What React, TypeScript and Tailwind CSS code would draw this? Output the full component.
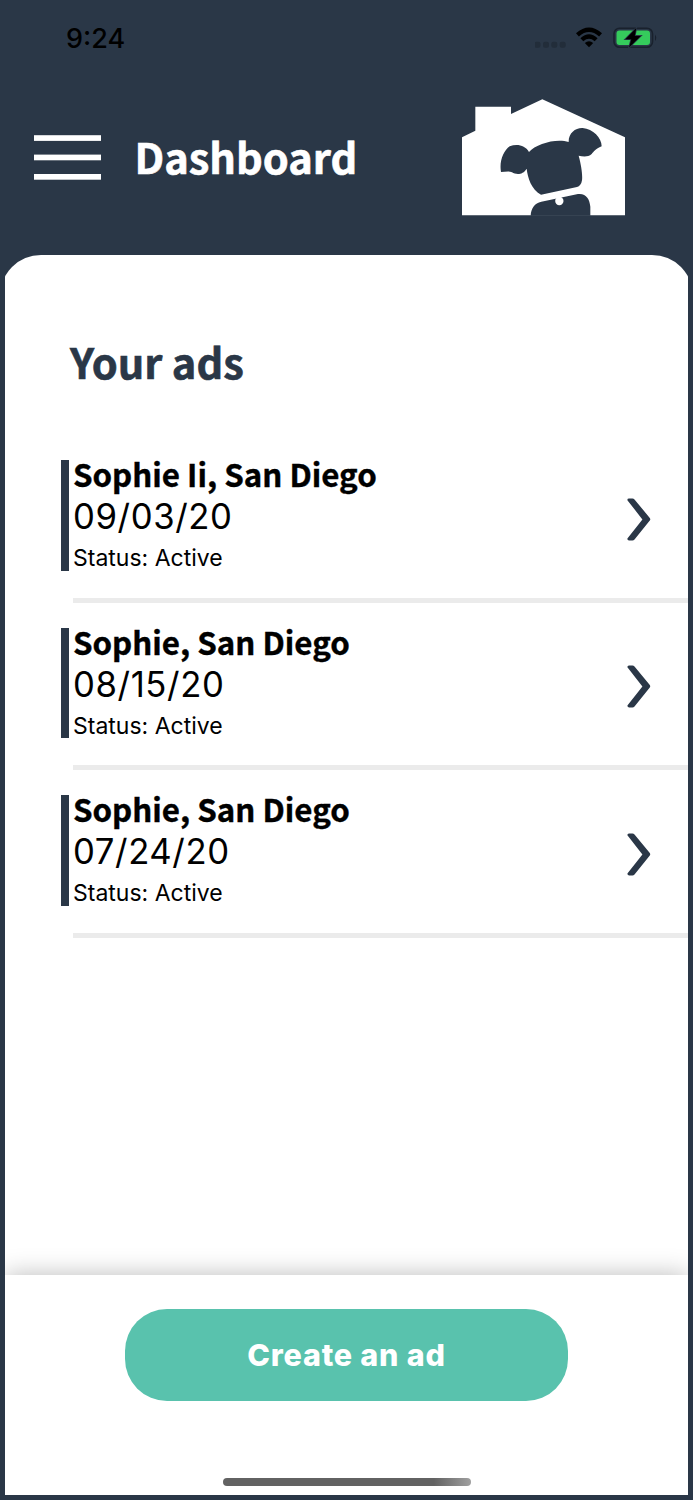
interface Ad {
  title: string;
  date: string;
  status: string;
}

const ads: Ad[] = [
  { title: "Sophie Ii, San Diego", date: "09/03/20", status: "Active" },
  { title: "Sophie, San Diego", date: "08/15/20", status: "Active" },
  { title: "Sophie, San Diego", date: "07/24/20", status: "Active" },
];

const StatusBar = () => {
  return (
    <div className="flex h-[76px] items-center justify-between pl-[66px] pr-[36px]">
      <span className="mt-0.5 font-['Inter',sans-serif] text-[27px] font-medium leading-8 text-black">9:24</span>

      <div className="flex items-center">
        <svg className="h-[26px] w-[122px]" viewBox="0 0 122 26">
          {/* Signal dots */}
          <g fill="#222d3a">
            <rect x="-0.5" y="16.8" width="6" height="6" rx="2" />
            <rect x="8" y="16.8" width="6" height="6" rx="2" />
            <rect x="16.3" y="16.8" width="6" height="6" rx="2" />
            <rect x="24.7" y="16.8" width="6" height="6" rx="2" />
          </g>

          {/* Wifi */}
          <path d="M41 8.3Q54 -3.5 67 8.3L64.1 11.4Q54 2.6 43.9 11.4Z" />
          <path d="M45.4 13.2Q54 5.4 62.6 13.2L59.7 16.3Q54 11.4 48.3 16.3Z" />
          <path d="M49.8 17.9Q54 14.4 58.2 17.9L54 22.2Z" />

          {/* Battery */}
          <rect x="79" y="3.3" width="38.5" height="19" rx="5.5" fill="none" stroke="#19212d" strokeWidth="1.6" />
          <rect x="81.5" y="5.6" width="33.5" height="14.4" rx="3" fill="#35cb5c" />
          <path d="M120 9.5Q122.5 12.8 120 16.1Z" fill="#19212d" />
          <path
            d="M101.3 3L90.4 14.2H96.3L94 22.5L105.8 10.9H99.8Z"
            stroke="#2a3747"
            strokeWidth="1.6"
            paintOrder="stroke"
          />
        </svg>
      </div>
    </div>
  );
};

const Logo = () => {
  return (
    <svg className="h-[117px] w-[164px]" viewBox="66 57 492 351">
      <path d="M66 406V172L106 152V80H213V102L307 58L555 172V406Z" fill="#fff" />
      <g fill="#2a3747">
        {/* Head */}
        <path d="M267 216C288 191 350 174 386 186C385 160 406 143 428 144C459 147 485 173 485 199C466 207 461 216 455 222C444 232 429 230 416 227C424 256 428 285 426 301C424 313 419 319 411 321L303 344C274 328 263 293 260 266C248 286 228 284 216 277C207 272 194 276 183 276C177 243 191 212 209 199C232 191 255 196 267 216Z" />
        {/* Body */}
        <path d="M272 407C273 385 284 369 304 365L414 342C438 339 449 357 451 380L451 407Z" />
      </g>
      <circle cx="358" cy="363" r="12.5" fill="#fff" />
    </svg>
  );
};

const Header = () => {
  return (
    <header className="flex h-[178px] items-start pl-[33.5px]">
      <button aria-label="Menu" className="mt-[59px] w-[67px]">
        <svg className="h-[46px] w-full" viewBox="0 0 67 46" fill="#fff">
          <rect y="0.2" width="67" height="5.7" />
          <rect y="19.6" width="67" height="5.7" />
          <rect y="39" width="67" height="5.7" />
        </svg>
      </button>
      <h1 className="ml-[34px] mt-[50px] w-[327.5px] font-['Noto_Sans_CJK_JP',sans-serif] text-[41.6px] font-bold leading-[60px] text-white [-webkit-text-stroke:0.6px_white]">
        Dashboard
      </h1>
      <div className="mt-[23px]">
        <Logo />
      </div>
    </header>
  );
};

const AdRow = ({ ad }: { ad: Ad }) => {
  return (
    <li className="flex h-[167.5px] flex-col pl-[56px]">
      <div className="flex h-[110.5px] items-center">
        <span className="h-full w-2 bg-[#2a3747]" />
        <div className="flex h-full flex-1 flex-col pl-1 text-black">
          <span className="h-[36px] shrink-0 font-['Noto_Sans_CJK_JP',sans-serif] text-[31.3px] font-bold leading-[27px] [-webkit-text-stroke:0.4px_black]">
            {ad.title}
          </span>
          <span className="shrink-0 font-['Inter',sans-serif] text-[34.7px] leading-[41px] tracking-[0.6px]">
            {ad.date}
          </span>
          <span className="shrink-0 font-['Inter',sans-serif] text-[23px] leading-[43px]">Status: {ad.status}</span>
        </div>
        <svg className="mr-[37.5px] mt-[7px] h-[43px] w-6" viewBox="0 0 24 43">
          <path
            d="M0.4 2.2Q0.2 0.4 2 0.4H5.4Q6.7 0.4 7.5 1.4L22.8 20Q23.8 21.3 22.8 22.6L7.5 41.4Q6.7 42.4 5.4 42.4H2Q0.2 42.4 0.4 40.6L15.4 21.4Z"
            fill="#2a3747"
          />
        </svg>
      </div>
      <div className="ml-3 mt-[27px] h-[5px] bg-[#ebebeb]" />
    </li>
  );
};

const App = () => {
  return (
    <div className="h-[1500px] w-[693px] overflow-hidden bg-[#2a3747]">
      <StatusBar />
      <Header />

      <div className="mx-[5px] h-[1241px] overflow-hidden pt-[0.5px]">
        <main className="-mx-[5px] flex h-full flex-col rounded-t-[41px] bg-white px-[5px]">
          <h2 className="ml-[65px] mt-[76px] h-[129.9px] font-['Noto_Sans_CJK_JP',sans-serif] text-[41.6px] font-bold leading-[60px] text-[#2a3747] [-webkit-text-stroke:0.6px_#2a3747]">
            Your ads
          </h2>
          <ul className="flex-1">
            {ads.map((ad) => (
              <AdRow key={ad.date} ad={ad} />
            ))}
          </ul>

          <footer className="flex h-[220px] flex-col items-center bg-white pt-[34px] shadow-[0_0_24px_rgba(0,0,0,0.27)]">
            <button className="h-[92px] w-[443px] rounded-[42px] bg-[#59c2ad] font-['Inter',sans-serif] text-[30.5px] font-extrabold tracking-[0.8px] text-white">
              Create an ad
            </button>
            <div className="mt-[77px] h-2 w-[248px] rounded-full bg-linear-to-r from-[#626262] from-85% to-[#a0a0a0]" />
          </footer>
        </main>
      </div>
    </div>
  );
};

export default App;
